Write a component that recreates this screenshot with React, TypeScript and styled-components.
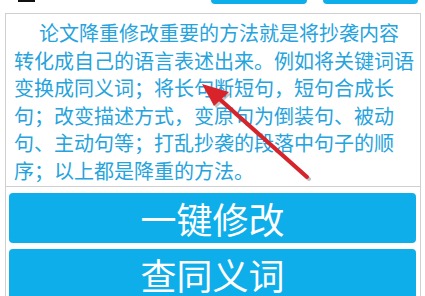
import React from "react";
import styled, { createGlobalStyle } from "styled-components";

const Global = createGlobalStyle`
  html, body { margin: 0; padding: 0; background: #ffffff; }
  body { font-family: "Noto Sans CJK SC", "Noto Sans", sans-serif; overflow: hidden; }
`;

const Page = styled.div`
  position: relative;
  width: 425px;
  height: 296px;
  overflow: hidden;
  background: #fff;
`;

const TopBar = styled.div`
  height: 13px;
  display: flex;
  align-items: flex-start;
`;

const Mark = styled.div`
  width: 17px;
  height: 2px;
  margin-left: 18px;
  background: #111;
`;

const TopButton = styled.div<{ $left: number; $width: number }>`
  margin-left: ${(p) => p.$left}px;
  width: ${(p) => p.$width}px;
  height: 4px;
  background: #0eaeea;
  border-radius: 0 0 4px 4px;
`;

const Panel = styled.div`
  margin-left: 5px;
  width: 414px;
  border-left: 1px solid #cfcfcf;
  border-right: 1px solid #cfcfcf;
  height: 290px;
  display: flex;
  flex-direction: column;
`;

const TextBox = styled.div`
  box-sizing: border-box;
  height: 174px;
  border-top: 1px solid #cfcfcf;
  border-bottom: 1px solid #cfcfcf;
  padding: 5px 4px 0 8px;
  color: #26a3dc;
  font-size: 20px;
  line-height: 27.5px;
  text-indent: 25px;
  line-break: strict;
`;

const ActionButton = styled.div`
  margin: 6px 4px 0 3px;
  height: 50px;
  flex: 0 0 50px;
  background: #0eaeea;
  border-radius: 4px;
  color: #ffffff;
  font-size: 36px;
  line-height: 50px;
  text-align: center;
`;

const Overlay = styled.svg`
  position: absolute;
  left: 0;
  top: 0;
  pointer-events: none;
`;

function Arrow() {
  return (
    <Overlay width={425} height={296} viewBox="0 0 425 296">
      <g opacity={0.35} transform="translate(2 2)">
        <line x1={307} y1={177} x2={215} y2={95} stroke="#555" strokeWidth={4} strokeLinecap="round" />
        <polygon points="202,84 229,92 214,106" fill="#555" />
      </g>
      <line x1={307} y1={177} x2={215} y2={95} stroke="#d9232b" strokeWidth={4} strokeLinecap="round" />
      <polygon points="202,84 229,92 214,106" fill="#d9232b" />
    </Overlay>
  );
}

export default function App() {
  return (
    <Page>
      <Global />
      <TopBar>
        <Mark />
        <TopButton $left={176} $width={96} />
        <TopButton $left={16} $width={95} />
      </TopBar>
      <Panel>
        <TextBox>
          论文降重修改重要的方法就是将抄袭内容转化成自己的语言表述出来。例如将关键词语变换成同义词；将长句断短句，短句合成长句；改变描述方式，变原句为倒装句、被动句、主动句等；打乱抄袭的段落中句子的顺序；以上都是降重的方法。
        </TextBox>
        <ActionButton>一键修改</ActionButton>
        <ActionButton>查同义词</ActionButton>
      </Panel>
      <Arrow />
    </Page>
  );
}
